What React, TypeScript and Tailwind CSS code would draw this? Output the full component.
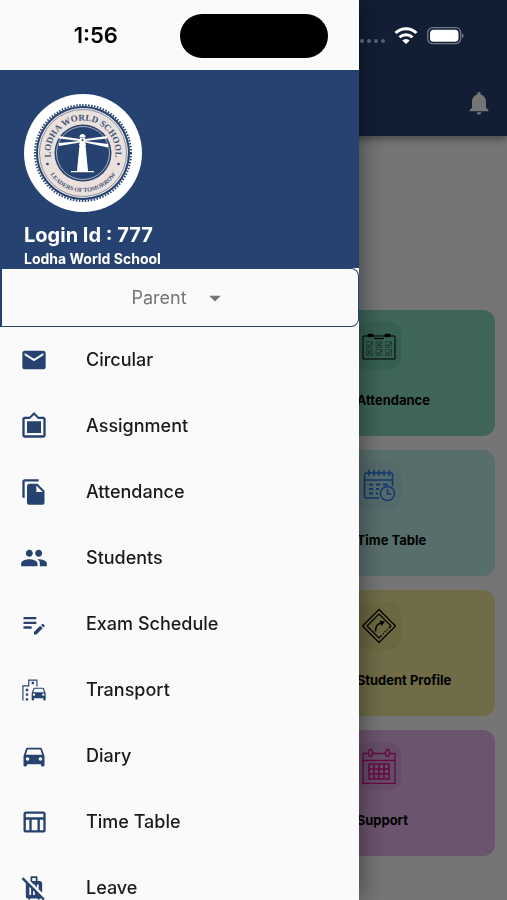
import type { ReactNode } from "react";
import {
  MdArrowDropDown,
  MdDirectionsCar,
  MdEditNote,
  MdEmail,
  MdEmojiTransportation,
  MdFileCopy,
  MdFilterFrames,
  MdNoLuggage,
  MdNotifications,
  MdOutlineTableChart,
  MdPeople,
} from "react-icons/md";

const menu = [
  { name: "Circular", icon: MdEmail },
  { name: "Assignment", icon: MdFilterFrames },
  { name: "Attendance", icon: MdFileCopy },
  { name: "Students", icon: MdPeople },
  { name: "Exam Schedule", icon: MdEditNote },
  { name: "Transport", icon: MdEmojiTransportation },
  { name: "Diary", icon: MdDirectionsCar },
  { name: "Time Table", icon: MdOutlineTableChart },
  { name: "Leave", icon: MdNoLuggage },
];

function AttendanceIcon() {
  return (
    <svg viewBox="0 0 36 36" className="size-9" fill="none" stroke="#000" aria-hidden="true">
      <path d="M2 8h32v23H2z" strokeWidth="1" />
      <path d="M8 7.500h3M25 7.500h3" strokeWidth="3.500" strokeLinecap="round" />
      <path d="M13 10.500h10" strokeWidth="1.300" />
      {[5.5, 15, 24.5].map((x) => (
        <path
          key={x}
          d={`M${x} 13.500h6v6h-6zM${x} 21.500h6v6h-6z`}
          strokeWidth="0.600"
          opacity="0.5"
        />
      ))}
      <path
        d="m6.500 16.500 1.500 2 3-4M25.500 16.500l1.500 2 3-4M16 14.500l4 4m0-4-4 4M6.500 22.500l4 4m0-4-4 4M16 24.500l1.500 2 3-4M25.500 24.500l1.500 2 3-4"
        strokeWidth="0.800"
        opacity="0.8"
      />
    </svg>
  );
}

function TimeTableIcon() {
  return (
    <svg viewBox="0 0 36 36" className="size-9" fill="none" stroke="#2a7af0" strokeWidth="1.600" aria-hidden="true">
      <path d="M18 30H5.500A2 2 0 0 1 3.500 28V7a2 2 0 0 1 2-2h24a2 2 0 0 1 2 2v11M3.500 12h28" />
      <path d="M8 2.500v5M13 2.500v5M18 2.500v5M23 2.500v5M28 2.500v5" strokeLinecap="round" />
      <path d="M8 16.500h4M15 16.500h4M22 16.500h5M8 21h4M15 21h3M8 25.500h4M15 25.500h2" strokeWidth="2" />
      <circle cx="26.500" cy="25.500" r="7" />
      <path d="M26.500 21v5h4" />
    </svg>
  );
}

function ProfileIcon() {
  return (
    <svg viewBox="0 0 36 36" className="size-9" fill="none" stroke="#000" strokeLinejoin="round" aria-hidden="true">
      <path d="M18 1.500 34.500 18 18 34.500 1.500 18z" strokeWidth="1.200" />
      <path d="M20 28 18 30 6 18 18 6 30 18l-2 2" strokeWidth="1.100" />
      <path d="m20 28 8-8" strokeWidth="1.300" strokeDasharray="1.200 1.500" />
      <path d="M14.500 23.500c0-5 2-8 6-8.500" strokeWidth="1.500" />
      <path d="m18.500 12.500 5.500 1-3.500 4.500z" fill="#000" stroke="none" />
    </svg>
  );
}

function SupportIcon() {
  return (
    <svg viewBox="0 0 36 36" className="size-9" fill="none" stroke="#e0148c" strokeWidth="1.300" aria-hidden="true">
      <path d="M7 5.500H2v30h32v-30h-5M12 5.500h12M2 12.500h32" />
      <ellipse cx="9.500" cy="5" rx="2" ry="3.500" />
      <ellipse cx="26.500" cy="5" rx="2" ry="3.500" />
      <path d="M8 16h20v15H8zM8 21h20M8 26h20M13 16v15M18 16v15M23 16v15" strokeWidth="1.600" />
    </svg>
  );
}

function SchoolLogo() {
  return (
    <svg viewBox="0 0 118 118" className="size-[118px]" role="img" aria-label="Lodha World School">
      <defs>
        <path id="arc-top" d="M31 75.500a32.500 32.500 0 1 1 56 0" />
        <path id="arc-bottom" d="M20 59a39 39 0 0 0 78 0" />
      </defs>
      <circle cx="59" cy="59" r="59" fill="#fff" />
      <circle cx="59" cy="59" r="48" fill="none" stroke="#264270" strokeWidth="2" strokeDasharray="1.500 1.500" />
      <circle cx="59" cy="59" r="47" fill="#264270" />
      <circle cx="59" cy="59" r="45" fill="#eae0dc" />
      <circle cx="59" cy="59" r="43.500" fill="none" stroke="#264270" strokeWidth="0.500" />
      <circle cx="59" cy="59" r="28.500" fill="#264270" />
      <circle cx="59" cy="59" r="26.500" fill="none" stroke="#eae0dc" strokeWidth="0.700" />
      <g fill="#3f5579" className="font-['Liberation_Serif',serif] font-bold" textAnchor="middle">
        <text fontSize="9">
          <textPath href="#arc-top" startOffset="50%">LODHA WORLD SCHOOL</textPath>
        </text>
        <text fontSize="6">
          <textPath href="#arc-bottom" startOffset="50%">LEADERS OF TOMORROW</textPath>
        </text>
      </g>
      <circle cx="23.500" cy="70" r="1.300" fill="#264270" />
      <circle cx="94.500" cy="70" r="1.300" fill="#264270" />
      <g fill="#fff">
        <path d="M56 45 35 42v2.500l21 2.500zM56 47l-21 2v3l21-3.500zM61 45l22-3v2.500L61 47zM61 47l23 3v3.500l-23-5z" />
        <path d="M55.500 51h6l2.500 26H53zM55 49.500h7V51h-7zM56 44h5v5.500h-5zM55.500 43.500a3 3.500 0 0 1 6 0zM47 77h23v1.300H47z" />
      </g>
      <circle cx="58.500" cy="46" r="1.100" fill="#264270" />
    </svg>
  );
}

const cards: { name: string; icon: ReactNode; card: string; tile: string }[] = [
  { name: "Attendance", icon: <AttendanceIcon />, card: "bg-[#89dcbf]", tile: "bg-[#76d0b0]" },
  { name: "Time Table", icon: <TimeTableIcon />, card: "bg-[#c1f0ec]", tile: "bg-[#b8e8e8]" },
  { name: "Student Profile", icon: <ProfileIcon />, card: "bg-[#f1eb9c]", tile: "bg-[#eae38e]" },
  { name: "Support", icon: <SupportIcon />, card: "bg-[#e9b7ed]", tile: "bg-[#dda9e2]" },
];

function StatusBar() {
  return (
    <div className="pointer-events-none fixed inset-x-0 top-0 z-30 grid h-[71px] grid-cols-[1fr_148px_1fr] items-center">
      <time className="pl-3 text-center text-[22px] font-semibold text-black">1:56</time>
      <div className="h-11 rounded-full bg-black" />
      <div className="flex items-center justify-end gap-2 pr-[43px]">
        <svg viewBox="0 0 26 22" className="h-[22px] w-[26px]" fill="#566073" aria-hidden="true">
          <circle cx="2" cy="16" r="2" />
          <circle cx="9" cy="16" r="2" />
          <circle cx="16" cy="16" r="2" />
          <circle cx="23" cy="16" r="2" />
        </svg>
        <svg viewBox="0 0 24 18" className="h-[18px] w-6" fill="none" stroke="#fff" strokeWidth="3" aria-hidden="true">
          <path d="M1.500 6a15 15 0 0 1 21 0M5.500 10.300a9.300 9.300 0 0 1 13 0" />
          <path d="M12 17 8.300 13.500a5.300 5.300 0 0 1 7.400 0z" fill="#fff" stroke="none" />
        </svg>
        <svg viewBox="0 0 38 18" className="h-[18px] w-[38px]" aria-hidden="true">
          <rect x="1.700" y="0.700" width="33" height="16" rx="5" fill="none" stroke="#727988" strokeWidth="1.300" />
          <rect x="4" y="2.700" width="28.500" height="12" rx="3.500" fill="#fff" />
          <path d="M36 6.500c2 .5 2 4 0 4.500z" fill="#727988" />
        </svg>
      </div>
    </div>
  );
}

function Drawer() {
  return (
    <aside className="fixed inset-y-0 left-0 z-20 w-[70.8%] overflow-hidden bg-[#fafafa] pt-[70px] shadow-[0_0_26px_rgba(0,0,0,0.5)]">
      <header className="bg-[#264270] px-6 pt-6 text-white">
        <SchoolLogo />
        <h1 className="mt-2 text-xl leading-[30px] font-bold">Login Id : 777</h1>
        <p className="text-sm leading-[18px] font-bold">Lodha World School</p>
      </header>
      <label className="flex h-[59px] items-center justify-center gap-[14px] rounded-r-lg border border-l-2 border-[#264270] text-[#757575]">
        <select
          aria-label="Role"
          className="appearance-none bg-transparent text-lg outline-none [field-sizing:content]"
        >
          <option>Parent</option>
        </select>
        <MdArrowDropDown className="size-7" />
      </label>
      <nav>
        <ul>
          {menu.map((item) => (
            <li key={item.name}>
              <a href="#" className="flex h-[66px] items-center gap-[38px] px-5">
                <item.icon className="size-7 text-[#264270]" />
                <span className="text-lg font-medium text-[#1a1a1a]">{item.name}</span>
              </a>
            </li>
          ))}
        </ul>
      </nav>
    </aside>
  );
}

export default function App() {
  return (
    <div className="min-h-screen overflow-hidden bg-white font-['Inter','Liberation_Sans',sans-serif]">
      <header className="flex items-center justify-end bg-[#264270] px-[14px] pt-[70px] shadow-[0_3px_8px_rgba(0,0,0,0.4)]">
        <button aria-label="Notifications" className="flex h-[66px] items-center text-white">
          <MdNotifications className="size-7" />
        </button>
      </header>
      <main className="grid grid-cols-3 gap-x-4 gap-y-[14px] px-3 pt-[174px] pb-10">
        {cards.map((item) => (
          <a
            key={item.name}
            href="#"
            className={`${item.card} col-start-3 flex h-[126px] flex-col gap-5 rounded-xl p-3`}
          >
            <span className={`${item.tile} flex h-12 w-11 items-center justify-center rounded-xl`}>
              {item.icon}
            </span>
            <span className="text-[13px] leading-5 font-bold text-black">{item.name}</span>
          </a>
        ))}
      </main>
      <div className="fixed inset-0 z-10 bg-black/54" />
      <Drawer />
      <StatusBar />
    </div>
  );
}
